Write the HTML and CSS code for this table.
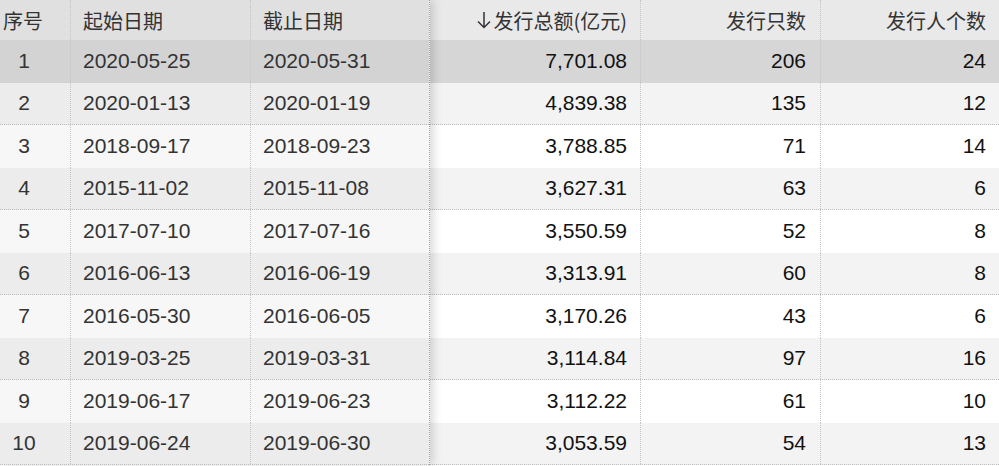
FILE: index.html
```html
<!DOCTYPE html>
<html lang="zh-CN">
<head>
<meta charset="utf-8">
<title>发行统计</title>
<link rel="stylesheet" href="styles.css">
</head>
<body>
<div class="grid">
  <div class="pane frozen">
    <div class="row head">
      <div class="c c-idx h">序号</div>
      <div class="c c-date h">起始日期</div>
      <div class="c c-date h">截止日期</div>
    </div>
    <div class="row sel"><div class="c c-idx">1</div><div class="c c-date">2020-05-25</div><div class="c c-date">2020-05-31</div></div>
    <div class="row even"><div class="c c-idx">2</div><div class="c c-date">2020-01-13</div><div class="c c-date">2020-01-19</div></div>
    <div class="row odd"><div class="c c-idx">3</div><div class="c c-date">2018-09-17</div><div class="c c-date">2018-09-23</div></div>
    <div class="row even"><div class="c c-idx">4</div><div class="c c-date">2015-11-02</div><div class="c c-date">2015-11-08</div></div>
    <div class="row odd"><div class="c c-idx">5</div><div class="c c-date">2017-07-10</div><div class="c c-date">2017-07-16</div></div>
    <div class="row even"><div class="c c-idx">6</div><div class="c c-date">2016-06-13</div><div class="c c-date">2016-06-19</div></div>
    <div class="row odd"><div class="c c-idx">7</div><div class="c c-date">2016-05-30</div><div class="c c-date">2016-06-05</div></div>
    <div class="row even"><div class="c c-idx">8</div><div class="c c-date">2019-03-25</div><div class="c c-date">2019-03-31</div></div>
    <div class="row odd"><div class="c c-idx">9</div><div class="c c-date">2019-06-17</div><div class="c c-date">2019-06-23</div></div>
    <div class="row even"><div class="c c-idx">10</div><div class="c c-date">2019-06-24</div><div class="c c-date">2019-06-30</div></div>
  </div>
  <div class="pane scroll">
    <div class="row head">
      <div class="c c-amt h"><svg class="arrow" width="14" height="18" viewBox="0 0 14 18"><path d="M7 1V16.5M1 10.5L7 16.5L13 10.5" fill="none" stroke="#333" stroke-width="1.5"/></svg>发行总额(亿元)</div>
      <div class="c c-cnt h">发行只数</div>
      <div class="c c-iss h">发行人个数</div>
    </div>
    <div class="row sel"><div class="c c-amt">7,701.08</div><div class="c c-cnt">206</div><div class="c c-iss">24</div></div>
    <div class="row even"><div class="c c-amt">4,839.38</div><div class="c c-cnt">135</div><div class="c c-iss">12</div></div>
    <div class="row odd"><div class="c c-amt">3,788.85</div><div class="c c-cnt">71</div><div class="c c-iss">14</div></div>
    <div class="row even"><div class="c c-amt">3,627.31</div><div class="c c-cnt">63</div><div class="c c-iss">6</div></div>
    <div class="row odd"><div class="c c-amt">3,550.59</div><div class="c c-cnt">52</div><div class="c c-iss">8</div></div>
    <div class="row even"><div class="c c-amt">3,313.91</div><div class="c c-cnt">60</div><div class="c c-iss">8</div></div>
    <div class="row odd"><div class="c c-amt">3,170.26</div><div class="c c-cnt">43</div><div class="c c-iss">6</div></div>
    <div class="row even"><div class="c c-amt">3,114.84</div><div class="c c-cnt">97</div><div class="c c-iss">16</div></div>
    <div class="row odd"><div class="c c-amt">3,112.22</div><div class="c c-cnt">61</div><div class="c c-iss">10</div></div>
    <div class="row even"><div class="c c-amt">3,053.59</div><div class="c c-cnt">54</div><div class="c c-iss">13</div></div>
  </div>
</div>
</body>
</html>
```

FILE: styles.css
```css
html, body {
  margin: 0;
  padding: 0;
  background: #ffffff;
}
body {
  width: 999px;
  height: 466px;
  overflow: hidden;
  font-family: "Liberation Sans", Arial, "Noto Sans CJK SC", sans-serif;
  font-size: 21px;
  color: #333;
}
.grid {
  display: flex;
  width: 999px;
}
.pane {
  display: flex;
  flex-direction: column;
}
.frozen {
  width: 430px;
  box-sizing: border-box;
  border-right: 1px dotted #9a9a9a;
  position: relative;
  z-index: 2;
  box-shadow: 3px 0 9px rgba(0, 0, 0, 0.16);
}
.scroll {
  width: 569px;
  color: #111;
}
.row {
  display: flex;
  height: 42.5px;
  box-sizing: border-box;
}
.row.head {
  height: 40px;
}
.row.even {
  border-bottom: 1px dotted #bdbdbd;
}
.c {
  display: flex;
  align-items: center;
  box-sizing: border-box;
  white-space: nowrap;
}
.h {
  font-family: "Noto Sans CJK SC", "Liberation Sans", sans-serif;
  font-size: 20px;
  color: #333;
}
.c-idx {
  width: 70px;
  justify-content: center;
  padding-right: 22px;
}
.c-idx.h {
  justify-content: flex-start;
  padding: 0 0 0 3px;
}
.c-date {
  width: 180px;
  padding-left: 12px;
  border-left: 1px dotted #c4c4c4;
}
.frozen .c-date:last-child {
  width: 179px;
}
.c-amt, .c-cnt, .c-iss {
  justify-content: flex-end;
  padding-right: 13px;
}
.c-amt { width: 210px; }
.c-cnt { width: 180px; padding-right: 14px; border-left: 1px dotted #c4c4c4; }
.c-iss { width: 179px; border-left: 1px dotted #c4c4c4; }
.arrow {
  display: block;
  margin-right: 2px;
  margin-top: -1px;
}
.frozen .head { background: #e0e0e0; }
.scroll .head { background: #e9e9e9; }
.frozen .sel { background: #d3d3d3; }
.scroll .sel { background: #d6d6d6; }
.frozen .even { background: #ececec; }
.scroll .even { background: #f3f3f3; }
.frozen .odd { background: #f7f7f7; }
.scroll .odd { background: #ffffff; }
```
